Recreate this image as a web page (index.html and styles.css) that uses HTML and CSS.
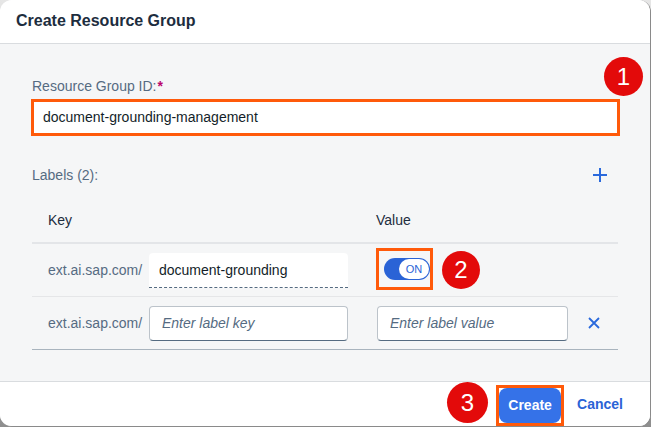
FILE: index.html
```html
<!DOCTYPE html>
<html>
<head>
<meta charset="utf-8">
<link rel="stylesheet" href="styles.css">
</head>
<body>
<div class="dialog">
  <header class="dlg-header">
    <h1 class="dlg-title">Create Resource Group</h1>
  </header>
  <main class="dlg-content">
    <label class="field-label">Resource Group ID:<span class="req">*</span></label>
    <div class="text-input highlighted">document-grounding-management</div>
    <div class="labels-bar">
      <span class="field-label">Labels (2):</span>
      <span class="icon-btn plus">
        <svg width="14" height="14" viewBox="0 0 14 14"><path d="M7 0V14M0 7H14" stroke="#2a69dc" stroke-width="2" fill="none"/></svg>
      </span>
    </div>
    <div class="label-table">
      <div class="tbl-row tbl-head">
        <div class="col-key">Key</div>
        <div class="col-val">Value</div>
      </div>
      <div class="tbl-row">
        <div class="prefix">ext.ai.sap.com/</div>
        <div class="cell-input readonly">document-grounding</div>
        <div class="cell-val">
          <span class="switch-frame"><span class="switch"><span class="handle">ON</span></span></span>
        </div>
      </div>
      <div class="tbl-row last">
        <div class="prefix">ext.ai.sap.com/</div>
        <div class="cell-input placeholder">Enter label key</div>
        <div class="cell-val"><div class="cell-input placeholder value-input">Enter label value</div></div>
        <div class="cell-del">
          <svg width="12" height="12" viewBox="0 0 12 12"><path d="M1 1L11 11M11 1L1 11" stroke="#2a69dc" stroke-width="1.8" fill="none"/></svg>
        </div>
      </div>
    </div>
  </main>
  <footer class="dlg-footer">
    <span class="btn-frame"><button class="btn emph">Create</button></span>
    <button class="btn transparent">Cancel</button>
  </footer>
  <span class="badge b1">1</span>
  <span class="badge b2">2</span>
  <span class="badge b3">3</span>
</div>
</body>
</html>
```
FILE: styles.css
```css
* { box-sizing: border-box; }
html, body { margin: 0; padding: 0; }
body {
  width: 651px;
  height: 427px;
  overflow: hidden;
  background: linear-gradient(#e6e6e6, #8e8e8e);
  font-family: "Liberation Sans", Arial, sans-serif;
  font-size: 14px;
  color: #1d2d3e;
}
.dialog {
  position: relative;
  width: 651px;
  height: 427px;
  display: flex;
  flex-direction: column;
  background: #f5f6f7;
  border-right: 1px solid #8a8a8a;
  border-bottom: 1px solid #8a8a8a;
  border-radius: 12px;
  overflow: hidden;
}
.dlg-header {
  height: 44px;
  flex: none;
  background: #fff;
  border-bottom: 1px solid #d9dcdf;
  display: flex;
  align-items: center;
  padding-left: 16px;
}
.dlg-title {
  margin: 0;
  font-size: 16px;
  font-weight: bold;
  color: #1d2d3e;
  line-height: 20px;
  position: relative;
  top: -1px;
}
.dlg-content {
  flex: 1;
  padding: 33px 32px 0 32px;
}
.field-label {
  display: block;
  line-height: 18px;
  height: 18px;
  color: #556b82;
  font-size: 14px;
}
.req { color: #ba066c; font-weight: bold; margin-left: 1px; }
.text-input {
  margin: 4px -2px 0 -1px;
  height: 37px;
  background: #fff;
  line-height: 31px;
  padding: 0 9px;
  color: #131e29;
}
.highlighted { border: 3px solid #ff5a0a; }
.labels-bar {
  margin-top: 30px;
  height: 18px;
  display: flex;
  justify-content: space-between;
  align-items: center;
}
.icon-btn { display: flex; margin-right: 11px; }
.label-table { margin-top: 14px; }
.tbl-row {
  display: grid;
  grid-template-columns: 101px 199px 28px 192px 1fr;
  align-items: center;
  padding-left: 16px;
  height: 53px;
  border-bottom: 1px solid #e5e6e8;
}
.tbl-head {
  height: 46px;
  border-bottom: 2px solid #e3e5e8;
  color: #1d2d3e;
}
.col-key { grid-column: 1 / 4; }
.col-val { grid-column: 4 / 5; }
.tbl-row.last { border-bottom-color: #a9b4be; }
.prefix { color: #556b82; white-space: nowrap; }
.cell-input {
  height: 35px;
  background: #fff;
  border-radius: 4px;
  line-height: 33px;
  padding: 0 12px;
  color: #131e29;
  white-space: nowrap;
}
.readonly {
  border-radius: 4px 4px 0 0;
  border-bottom: 1px dashed #556b81;
  padding-left: 10px;
  line-height: 34px;
}
.placeholder {
  border: 1px solid #bcc3ca;
  border-bottom-color: #556b81;
  color: #556b82;
  font-style: italic;
  padding-left: 12px;
}
.cell-val { grid-column: 4 / 5; display: flex; }
.value-input { width: 191px; margin-left: 1px; }
.cell-del { grid-column: 5 / 6; display: flex; padding-left: 20px; }
.switch-frame {
  width: 57px;
  height: 42px;
  border: 3px solid #ff5a0a;
  display: flex;
  align-items: center;
  padding-left: 5px;
  margin-top: -2px;
}
.switch {
  width: 46px;
  height: 22px;
  border-radius: 11px;
  background: #2a63d6;
  display: flex;
  align-items: center;
  justify-content: flex-end;
  padding-right: 1px;
}
.handle {
  width: 30px;
  height: 20px;
  border-radius: 10px;
  background: #fff;
  color: #2a63d6;
  font-size: 11px;
  line-height: 20px;
  text-align: center;
}
.dlg-footer {
  height: 45px;
  flex: none;
  background: #fff;
  border-top: 1px solid #d9dcdf;
  display: flex;
  justify-content: flex-end;
  align-items: center;
  gap: 3px;
  padding-right: 17px;
}
.btn-frame {
  display: flex;
  border: 3px solid #ff5a0a;
  background: #fff;
  margin-top: 2px;
}
.btn {
  height: 36px;
  font-family: "Liberation Sans", Arial, sans-serif;
  font-size: 14px;
  font-weight: bold;
  border: none;
  border-radius: 8px;
  cursor: pointer;
}
.emph {
  width: 62px;
  height: 35px;
  background: #3572e8;
  color: #fff;
}
.transparent {
  background: transparent;
  color: #2a63d6;
  padding: 0 10px;
}
.badge {
  position: absolute;
  border-radius: 50%;
  background: #e30a0a;
  color: #fff;
  font-size: 24px;
  text-align: center;
  font-family: "Liberation Sans", Arial, sans-serif;
}
.b1 { left: 604px; top: 57px; width: 39px; height: 39px; line-height: 39px; }
.b2 { left: 442px; top: 251px; width: 38px; height: 38px; line-height: 38px; }
.b3 { left: 447px; top: 382px; width: 41px; height: 41px; line-height: 41px; }
```
